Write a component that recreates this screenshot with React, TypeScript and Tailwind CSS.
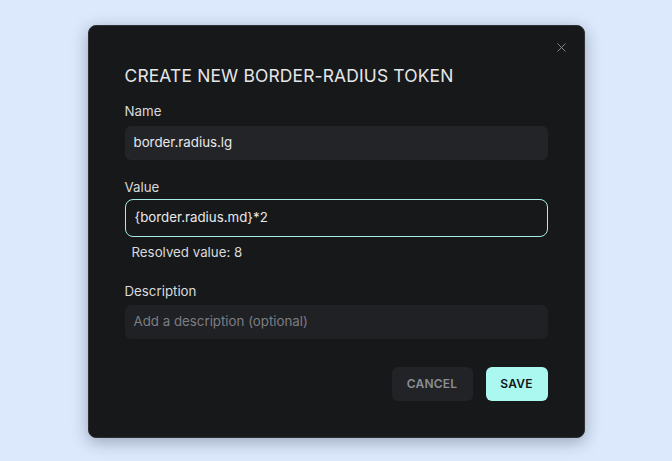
import { X } from 'lucide-react'

const App = () => {
  return (
    <div
      className="flex h-[461px] w-[672px] items-start justify-center bg-[#dce8fc] pt-[25px]"
      style={{ fontFamily: 'Inter, "Noto Sans", sans-serif' }}
    >
      <div className="relative w-[497px] rounded-lg border border-[#2e3033] bg-[#17181a] px-[36px] pb-[36px] pt-[37px] shadow-[0_4px_16px_rgba(30,40,60,0.35)]">
        <button className="absolute right-[15px] top-[14px] text-[#8a8d92]">
          <X className="h-[15px] w-[15px]" strokeWidth={1.5} />
        </button>

        <h2 className="text-[17.4px] font-normal tracking-[0.01em] text-[#e6e7e9]">
          CREATE NEW BORDER-RADIUS TOKEN
        </h2>

        <div className="mt-[13px] flex flex-col">
          <label className="text-[13.3px] text-[#d9dadc]">Name</label>
          <div className="mt-[4px] flex h-[34px] items-center rounded-md bg-[#232427] px-[9px] text-[13.3px] text-[#e8e9eb]">
            border.radius.lg
          </div>
        </div>

        <div className="mt-[18px] flex flex-col">
          <label className="text-[13.3px] text-[#d9dadc]">Value</label>
          <div className="mt-[1px] flex h-[38px] items-center rounded-lg border border-[#a6ede3] bg-[#17181a] px-[9px] text-[13.3px] text-[#e8e9eb]">
            {'{border.radius.md}*2'}
          </div>
          <div className="mt-[6px] pl-[7px] text-[13.3px] text-[#d9dadc]">Resolved value: 8</div>
        </div>

        <div className="mt-[19px] flex flex-col">
          <label className="text-[13.3px] text-[#d9dadc]">Description</label>
          <div className="mt-[3px] flex h-[34px] items-center rounded-md bg-[#202124] px-[9px] text-[13.3px] text-[#7b7e83]">
            Add a description (optional)
          </div>
        </div>

        <div className="mt-[28px] flex justify-end gap-[13px]">
          <button className="h-[34px] w-[81px] rounded-md bg-[#222326] text-[12px] font-semibold tracking-[0.02em] text-[#8b8e93]">
            CANCEL
          </button>
          <button className="h-[34px] w-[62px] rounded-md bg-[#aaf8ef] text-[12px] font-semibold tracking-[0.02em] text-[#141517]">
            SAVE
          </button>
        </div>
      </div>
    </div>
  )
}

export default App
